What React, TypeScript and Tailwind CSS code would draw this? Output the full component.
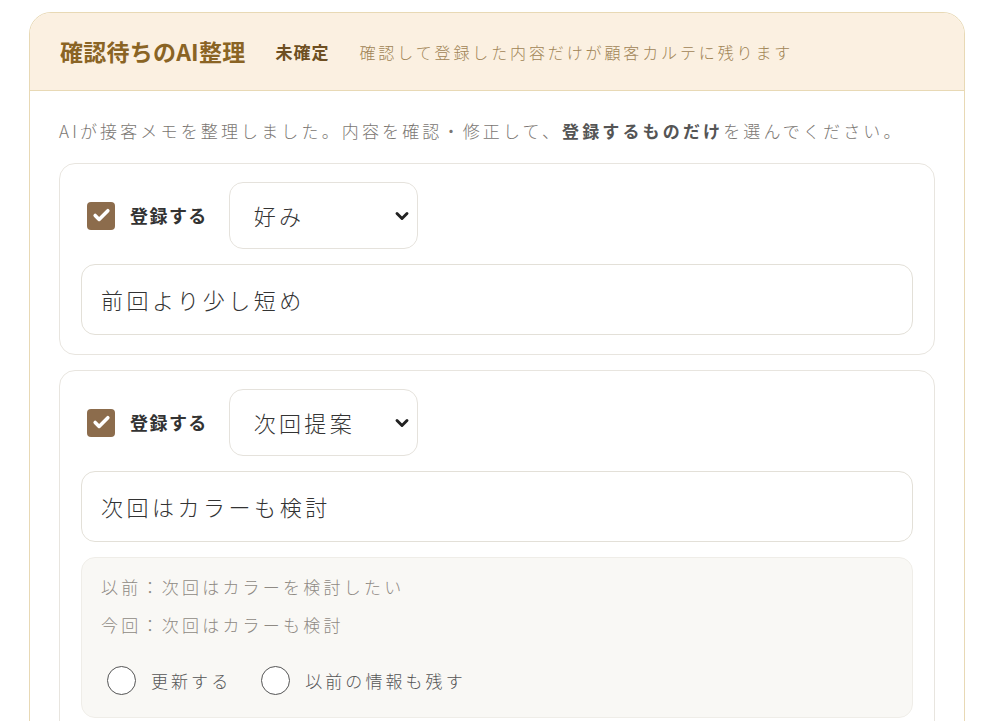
import React, { useState } from 'react';
import { Check, ChevronDown } from 'lucide-react';

const font = { fontFamily: '"Noto Sans CJK JP", "Noto Sans", sans-serif' };

interface Suggestion {
  id: string;
  category: string;
  text: string;
  previous?: string;
}

const suggestions: Suggestion[] = [
  { id: 'a', category: '好み', text: '前回より少し短め' },
  { id: 'b', category: '次回提案', text: '次回はカラーも検討', previous: '次回はカラーを検討したい' },
];

const Checkbox: React.FC<{ checked: boolean; onChange: () => void }> = ({ checked, onChange }) => (
  <button
    type="button"
    onClick={onChange}
    className={`w-[28px] h-[28px] rounded-[4px] flex items-center justify-center ${checked ? 'bg-[#8c6c4c]' : 'bg-white border-2 border-[#8c6c4c]'}`}
  >
    {checked && <Check className="w-[19px] h-[19px] text-white" strokeWidth={4.5} />}
  </button>
);

const Radio: React.FC<{ label: string; checked: boolean; onClick: () => void }> = ({ label, checked, onClick }) => (
  <button type="button" onClick={onClick} className="flex items-center gap-[15px]">
    <span className="w-[29px] h-[29px] rounded-full border-[1.5px] border-[#555] bg-white flex items-center justify-center">
      {checked && <span className="w-[14px] h-[14px] rounded-full bg-[#8c6c4c]" />}
    </span>
    <span className="text-[17px] font-light tracking-[0.18em] text-[#555] leading-[28px]">{label}</span>
  </button>
);

const SuggestionCard: React.FC<{ item: Suggestion }> = ({ item }) => {
  const [checked, setChecked] = useState(true);
  const [mode, setMode] = useState<'' | 'update' | 'keep'>('');

  return (
    <div className="border border-[#e8e5df] rounded-[16px] bg-white px-[21px] pt-[18px] pb-[19px] flex flex-col gap-[15px]">
      <div className="flex items-center pl-[6px]">
        <Checkbox checked={checked} onChange={() => setChecked(!checked)} />
        <span className="ml-[15px] text-[18px] font-bold tracking-[0.08em] text-[#333]">登録する</span>
        <div className="ml-[21px] w-[189px] h-[67px] border border-[#e5e2dc] rounded-[14px] bg-white flex items-center justify-between pl-[24px] pr-[5px]">
          <span className="text-[22px] font-light tracking-[0.15em] text-[#333]">{item.category}</span>
          <ChevronDown className="w-[20px] h-[20px] text-[#222]" strokeWidth={3.5} />
        </div>
      </div>

      <div className="h-[71px] border border-[#e3e0d8] rounded-[14px] bg-white flex items-center px-[19px]">
        <span className="text-[22px] font-light tracking-[0.16em] text-[#333]">{item.text}</span>
      </div>

      {item.previous && (
        <div className="bg-[#f9f8f5] border border-[#efede8] rounded-[14px] px-[19px] pt-[15px] pb-[22px]">
          <div className="text-[17px] font-light tracking-[0.19em] text-[#8f8a84] leading-[28px]">以前：{item.previous}</div>
          <div className="mt-[10px] text-[17px] font-light tracking-[0.19em] text-[#8f8a84] leading-[28px]">今回：{item.text}</div>
          <div className="mt-[27px] flex items-center gap-[30px] pl-[6px]">
            <Radio label="更新する" checked={mode === 'update'} onClick={() => setMode('update')} />
            <Radio label="以前の情報も残す" checked={mode === 'keep'} onClick={() => setMode('keep')} />
          </div>
        </div>
      )}
    </div>
  );
};

export default function App() {
  return (
    <div className="min-h-screen bg-white pt-[12px] px-[29px]" style={font}>
      <div className="border border-[#e8d9b5] rounded-[22px] overflow-hidden bg-white">
        <div className="h-[78px] bg-[#fbf0e1] border-b border-[#e8d9b5] flex items-center px-[30px] gap-[30px]">
          <h2 className="text-[23px] font-bold text-[#8a6424] tracking-[0.01em]">確認待ちのAI整理</h2>
          <span className="text-[17px] font-bold text-[#6e4f22] tracking-[0.06em]">未確定</span>
          <span className="text-[16px] font-light text-[#a08455] tracking-[0.18em]">確認して登録した内容だけが顧客カルテに残ります</span>
        </div>

        <div className="px-[29px] pt-[25px] pb-[30px]">
          <p className="text-[17px] font-light leading-[30px] tracking-[0.185em] text-[#7a7672] mb-[17px]">
            AIが接客メモを整理しました。内容を確認・修正して、<span className="font-bold text-[#555]">登録するものだけ</span>を選んでください。
          </p>
          <div className="flex flex-col gap-[15px]">
            {suggestions.map(s => (
              <SuggestionCard key={s.id} item={s} />
            ))}
          </div>
        </div>
      </div>
    </div>
  );
}
